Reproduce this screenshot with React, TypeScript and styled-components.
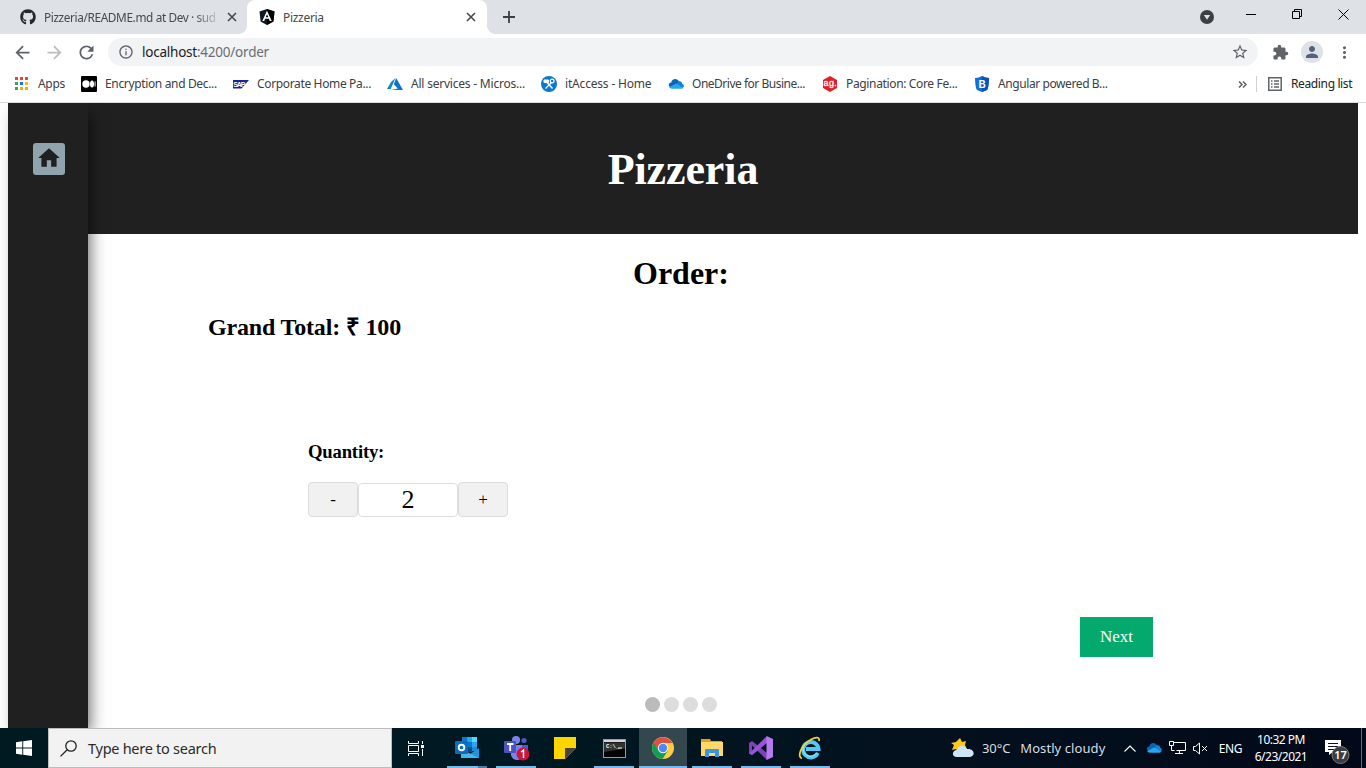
import React from 'react';
import styled, { createGlobalStyle } from 'styled-components';
import {
  MdArrowBack, MdArrowForward, MdRefresh, MdInfoOutline, MdStarBorder,
  MdExtension, MdPerson, MdMoreVert, MdHome,
} from 'react-icons/md';
import { FaGithub } from 'react-icons/fa';

const ui = '"Noto Sans", "Open Sans", sans-serif';
const serif = '"Liberation Serif", "Times New Roman", serif';

const GlobalStyle = createGlobalStyle`
  * { box-sizing: border-box; }
  html, body { margin: 0; padding: 0; overflow: hidden; background: #fff; }
  svg { display: block; flex: none; }
`;

const Screen = styled.div`
  width: 1366px;
  height: 768px;
  display: flex;
  flex-direction: column;
  overflow: hidden;
  font-family: ${ui};
`;

/* Browser tabs */
const TabStrip = styled.div`
  height: 34px;
  flex: none;
  display: flex;
  align-items: center;
  background: #dee1e6;
`;
const Tab = styled.div<{ $active?: boolean }>`
  position: relative;
  width: ${p => (p.$active ? 240 : 247)}px;
  height: 34px;
  display: flex;
  align-items: center;
  gap: 8px;
  padding: 0 9px 0 ${p => (p.$active ? 12 : 20)}px;
  border-radius: 8px 8px 0 0;
  background: ${p => (p.$active ? '#fff' : 'transparent')};
  &::before, &::after {
    content: '';
    display: ${p => (p.$active ? 'block' : 'none')};
    position: absolute;
    bottom: 0;
    width: 8px;
    height: 8px;
  }
  &::before { left: -8px; background: radial-gradient(circle at 0 0, transparent 7.5px, #fff 8px); }
  &::after { right: -8px; background: radial-gradient(circle at 100% 0, transparent 7.5px, #fff 8px); }
`;
const TabTitle = styled.div<{ $fade?: boolean }>`
  flex: 1;
  white-space: nowrap;
  font-size: ${p => (p.$fade ? 11.8 : 12)}px;
  letter-spacing: ${p => (p.$fade ? -0.37 : -0.3)}px;
  color: #45494d;
  ${p => p.$fade && 'mask-image: linear-gradient(90deg, #000 86%, rgba(0, 0, 0, 0.15) 100%);'}
`;
const NewTab = styled.div`
  width: 44px;
  display: flex;
  justify-content: center;
`;
const WindowControls = styled.div`
  margin-left: auto;
  display: flex;
  align-items: center;
  height: 34px;
`;
const ControlCell = styled.div<{ $w: number; $lift?: number }>`
  width: ${p => p.$w}px;
  display: flex;
  justify-content: center;
  padding-bottom: ${p => p.$lift ?? 0}px;
`;

/* Address bar */
const Toolbar = styled.div`
  height: 36px;
  flex: none;
  display: flex;
  align-items: center;
  background: #fff;
  color: #5f6368;
`;
const ToolButton = styled.div<{ $faded?: boolean }>`
  width: 32px;
  display: flex;
  justify-content: center;
  color: ${p => (p.$faded ? '#babcbe' : '#5f6368')};
`;
const NavButtons = styled.div`
  display: flex;
  padding: 0 6px;
`;
const Omnibox = styled.div`
  width: 1150px;
  height: 28px;
  border-radius: 14px;
  background: #f1f3f4;
  display: flex;
  align-items: center;
  padding: 0 9px 0 10px;
  margin-right: 6px;
`;
const Url = styled.div`
  flex: 1;
  padding-left: 8px;
  font-size: 13.5px;
  letter-spacing: -0.23px;
  color: #6a6e73;
  b { font-weight: 400; color: #202124; }
`;
const Avatar = styled.div`
  width: 22px;
  height: 22px;
  border-radius: 50%;
  background: #dee1e6;
  color: #54617a;
  display: flex;
  align-items: center;
  justify-content: center;
`;

/* Bookmarks */
const Bookmarks = styled.div`
  height: 33px;
  flex: none;
  display: flex;
  align-items: center;
  padding: 0 14px 4px;
  border-bottom: 1px solid #d8dadc;
  color: #3c4043;
  font-size: 12px;
`;
const Bookmark = styled.div<{ $w: number; $ls: number }>`
  width: ${p => p.$w}px;
  display: flex;
  gap: 8px;
  align-items: center;
  white-space: nowrap;
  letter-spacing: ${p => p.$ls}px;
  span { margin-top: -1px; }
`;
const BookmarkEnd = styled.div`
  margin-left: auto;
  display: flex;
  align-items: center;
  color: #202124;
  letter-spacing: -0.37px;
`;
const Divider = styled.i`
  width: 1px;
  height: 16px;
  background: #cfd1d3;
  margin: 0 11px 0 9px;
`;
const ReadingLabel = styled.span`
  width: 61px;
  margin: -1px 0 0 9px;
  white-space: nowrap;
`;

/* Pizzeria page */
const Page = styled.div`
  height: 625px;
  flex: none;
  display: flex;
  padding: 0 8px;
  background: #fff;
  font-family: ${serif};
  color: #000;
  overflow: hidden;
`;
const Sidebar = styled.aside`
  position: relative;
  width: 80px;
  flex: none;
  background: #202020;
  box-shadow: 5px 8px 15px -3px rgba(0, 0, 0, 0.6);
  padding: 40px 0 0 25px;
`;
const HomeButton = styled.div`
  width: 32px;
  height: 32px;
  border-radius: 3px;
  background: #90a4ae;
  color: #202020;
  display: flex;
  align-items: center;
  justify-content: center;
  padding: 0 1px 3px 0;
`;
const Main = styled.main`
  width: 1270px;
  display: flex;
  flex-direction: column;
`;
const Header = styled.header`
  height: 131px;
  flex: none;
  padding-right: 80px;
  background: #202020;
  display: flex;
  align-items: center;
  justify-content: center;
`;
const Title = styled.h1`
  margin: 3px 0 0;
  font-size: 44px;
  line-height: 50px;
  letter-spacing: -0.1px;
  color: #fff;
`;
const Heading = styled.h2`
  margin: 21px 84px 0 0;
  text-align: center;
  font-size: 32px;
  line-height: 37px;
`;
const Total = styled.h3`
  margin: 21px 0 0 120px;
  font-size: 24px;
  line-height: 28px;
  letter-spacing: -0.17px;
`;
const Quantity = styled.section`
  margin: 100px 0 0 220px;
`;
const QuantityLabel = styled.h4`
  margin: 0;
  font-size: 18.7px;
  line-height: 21px;
  letter-spacing: -0.2px;
`;
const Stepper = styled.div`
  display: flex;
  align-items: flex-end;
  margin-top: 20px;
`;
const StepButton = styled.button`
  width: 50px;
  height: 35px;
  padding: 0;
  border: 1px solid #ddd;
  border-radius: 4px;
  background: #f1f1f1;
  color: #000;
  font: 17px ${serif};
`;
const Count = styled.div`
  width: 100px;
  height: 34px;
  border: 1px solid #ddd;
  border-radius: 4px;
  text-align: center;
  font-size: 26px;
  line-height: 32px;
`;
const NextButton = styled.button`
  width: 73px;
  height: 40px;
  margin: 100px 205px 0 auto;
  padding: 0;
  border: 0;
  background: #04aa6d;
  color: #fff;
  font: 17px ${serif};
`;
const Steps = styled.div`
  display: flex;
  justify-content: center;
  gap: 4px;
  margin: 40px 84px 0 0;
`;
const Step = styled.i<{ $on?: boolean }>`
  width: 15px;
  height: 15px;
  border-radius: 50%;
  background: ${p => (p.$on ? '#bbb' : '#ddd')};
`;

/* Taskbar */
const Taskbar = styled.div`
  height: 40px;
  flex: none;
  display: flex;
  background: linear-gradient(90deg, #001a22 0%, #001821 40%, #03101d 70%, #020918 100%);
  color: #fff;
  white-space: nowrap;
`;
const TaskCell = styled.div<{ $w?: number; $active?: boolean }>`
  position: relative;
  width: ${p => p.$w ?? 48}px;
  height: 40px;
  flex: none;
  display: flex;
  align-items: center;
  justify-content: center;
  background: ${p => (p.$active ? '#33474f' : 'transparent')};
`;
const Running = styled.i<{ $wide?: boolean; $split?: boolean }>`
  position: absolute;
  bottom: 0;
  left: ${p => (p.$wide ? 0 : 4)}px;
  width: ${p => (p.$wide ? 48 : 40)}px;
  height: 2px;
  background: ${p => (p.$split ? 'linear-gradient(90deg, #76b9ed 31px, #4d7da2 31px)' : '#76b9ed')};
`;
const SearchBox = styled.div`
  width: 344px;
  height: 40px;
  border: 1px solid #bcbcbc;
  background: #f2f2f2;
  color: #2b2b2b;
  display: flex;
  align-items: center;
  gap: 11px;
  padding-left: 11px;
  font-size: 14.5px;
  letter-spacing: -0.27px;
`;
const Apps = styled.div`
  display: flex;
  gap: 1px;
  margin-left: 3px;
`;
const Tray = styled.div`
  margin-left: auto;
  display: flex;
  align-items: center;
`;
const Weather = styled.div`
  display: flex;
  align-items: center;
  width: 167px;
  font-size: 13px;
  color: #d8dde1;
`;
const WeatherText = styled.span<{ $gap: number; $ls: number }>`
  margin-left: ${p => p.$gap}px;
  letter-spacing: ${p => p.$ls}px;
`;
const Language = styled.div`
  width: 36px;
  padding-left: 1px;
  text-align: center;
  font-size: 12px;
  letter-spacing: -0.4px;
`;
const Clock = styled.div`
  width: 66px;
  text-align: center;
  font-size: 12px;
  line-height: 17px;
  letter-spacing: -0.5px;
  padding-bottom: 1px;
`;
const Notifications = styled.div`
  width: 47px;
  height: 40px;
  padding: 10px 0 0 11px;
`;
const DesktopEdge = styled.i`
  width: 5px;
  height: 40px;
  border-left: 1px solid #626975;
`;

const Cross = () => (
  <svg width="10" height="10" viewBox="0 0 10 10" stroke="#45494d" strokeWidth="1.6"><path d="M1 1l8 8M9 1l-8 8" /></svg>
);
const AngularMark = () => (
  <svg width="16" height="16" viewBox="0 0 16 16">
    <path d="M8 0l7.5 2.6-1.1 9.8L8 16l-6.4-3.6L.5 2.6z" fill="#10171f" />
    <path d="M8 0l7.5 2.6-1.1 9.8L8 16z" fill="#000" />
    <path d="M8 1.800L3.300 12h1.900l.9-2.200h3.800l.9 2.200h1.900zM8 5.300l1.300 3H6.700z" fill="#fff" fillRule="evenodd" />
  </svg>
);
const AppsGrid = () => (
  <svg width="16" height="16" viewBox="0 0 16 16">
    {['#ea4335', '#ea4335', '#ea4335', '#34a853', '#1a73e8', '#fbbc04', '#34a853', '#f9ab00', '#f9ab00'].map((c, i) => (
      <rect key={i} x={1 + (i % 3) * 5} y={1 + Math.floor(i / 3) * 5} width="3" height="3" fill={c} />
    ))}
  </svg>
);
const MediumMark = () => (
  <svg width="16" height="16" viewBox="0 0 16 16">
    <rect width="16" height="16" rx="1" fill="#000" />
    <circle cx="5" cy="8" r="3.7" fill="#fff" /><ellipse cx="11" cy="8" rx="2" ry="3.6" fill="#fff" />
    <ellipse cx="14.1" cy="8" rx=".6" ry="3.1" fill="#ddd" />
  </svg>
);
const SapMark = () => (
  <svg width="16" height="16" viewBox="0 0 16 16">
    <path d="M0 4h16l-7.5 8.5H0z" fill="#16258c" />
    <text x="0.2" y="10.8" fontFamily="Liberation Sans, sans-serif" fontSize="7" fontWeight="700" fill="#fff" textLength="12">SAP</text>
  </svg>
);
const AzureMark = () => (
  <svg width="16" height="16" viewBox="0 0 16 16">
    <path d="M8.500 2L4 6 0 13h3.700z" fill="#1584cf" />
    <path d="M9.200 2L6.800 8.300l4 4.200L4.500 14H16z" fill="#0d76c7" />
  </svg>
);
const ItMark = () => (
  <svg width="16" height="16" viewBox="0 0 16 16" fill="none" stroke="#fff">
    <circle cx="8" cy="8" r="8" fill="#0779cf" stroke="none" />
    <path d="M3 4h4.500v2.500H3z" fill="#fff" />
    <path d="M4.500 12.500l6-6M11.500 12.500L6 6.500" strokeWidth="1.400" />
    <circle cx="11.200" cy="5" r="1.900" strokeWidth="1.200" />
  </svg>
);
const Cloud = () => (
  <svg width="16" height="16" viewBox="0 0 17 17">
    <path d="M3.500 7C4 3 9 1.500 11.500 5.500L14 8 5 12C-.5 13 0 7 3.500 7z" fill="#0864b8" />
    <path d="M10.500 6C13 4.800 15 6 15.100 8.300 17.500 8.500 17.400 13 14.500 13L8 10z" fill="#1284d8" />
    <path d="M1.200 12L8.500 8l7.500 4.200Q15.500 13.500 14 13.500H4Q2 13.500 1.200 12z" fill="#28a8ea" />
  </svg>
);
const AgMark = () => (
  <svg width="16" height="16" viewBox="0 0 16 16">
    <path d="M8 0l7 4v8l-7 4-7-4V4z" fill="#e01f26" />
    <text x="1.500" y="10" fontFamily="Liberation Sans, sans-serif" fontSize="9" fill="#fff" stroke="#fff" strokeWidth=".3" textLength="13">ag.</text>
  </svg>
);
const BootstrapShield = () => (
  <svg width="16" height="16" viewBox="0 0 16 16">
    <path d="M8 0Q11 2 15 2q-.3 10-2 12l-5 2-5-2Q1.300 12 1 2 5 2 8 0z" fill="#0d6edc" />
    <path d="M8 0Q11 2 15 2q-.3 10-2 12l-5 2z" fill="#0753ba" />
    <text x="4.500" y="11.500" fontFamily="Liberation Sans, sans-serif" fontSize="10" fontWeight="700" fill="#fff">B</text>
  </svg>
);

const bookmarks = [
  { icon: <AppsGrid />, label: 'Apps', w: 67, ls: -0.3 },
  { icon: <MediumMark />, label: 'Encryption and Dec...', w: 152, ls: -0.35 },
  { icon: <SapMark />, label: 'Corporate Home Pa...', w: 154, ls: -0.35 },
  { icon: <AzureMark />, label: 'All services - Micros...', w: 154, ls: -0.21 },
  { icon: <ItMark />, label: 'itAccess - Home', w: 127, ls: -0.18 },
  { icon: <Cloud />, label: 'OneDrive for Busine...', w: 154, ls: -0.49 },
  { icon: <AgMark />, label: 'Pagination: Core Fe...', w: 152, ls: -0.35 },
  { icon: <BootstrapShield />, label: 'Angular powered B...', w: 140, ls: -0.41 },
];

const Outlook = () => (
  <svg width="24" height="24" viewBox="0 0 24 24">
    <path d="M7 1h15v14H7z" fill="#1490df" /><path d="M7 1h5v5H7z" fill="#0f78c8" /><path d="M12 1h5v5h-5z" fill="#28a8ea" /><path d="M17 1h5v5h-5z" fill="#50d9ff" />
    <path d="M12 6h5v5h-5z" fill="#0078d4" /><path d="M17 6h5v5h-5z" fill="#28a8ea" /><path d="M12 11h5v5h-5z" fill="#064a8c" />
    <path d="M6 22V14l9 4 9-6v10z" fill="#1e94dc" /><path d="M6 13l18 9H6z" fill="#42b8ed" />
    <rect y="5" width="13" height="13" rx="1" fill="#0f6cbd" />
    <circle cx="6.500" cy="11.500" r="2.800" fill="none" stroke="#fff" strokeWidth="1.900" />
  </svg>
);
const Teams = () => (
  <svg width="26" height="26" viewBox="0 0 26 26">
    <circle cx="13" cy="5" r="4" fill="#7b83eb" /><circle cx="21" cy="5.500" r="2.600" fill="#5059c9" />
    <path d="M8 10h12v8a6 6 0 0 1-12 2z" fill="#7b83eb" /><path d="M19 10h6v7q-1 4-5 3z" fill="#5059c9" />
    <rect x="1" y="6" width="12" height="12" rx="1" fill="#4b53bc" />
    <path d="M4 9h6.500M7.200 9v7" stroke="#fff" strokeWidth="1.800" />
    <circle cx="20" cy="19" r="6.500" fill="#cf1237" />
    <path d="M18 17l2.500-2v8" fill="none" stroke="#fff" strokeWidth="1.500" />
  </svg>
);
const Sticky = () => (
  <svg width="22" height="22" viewBox="0 0 22 22"><path d="M0 0h22v11L11 22H0z" fill="#ffd500" /><path d="M11 11h11L11 22z" fill="#48443d" /></svg>
);
const Terminal = () => (
  <svg width="23" height="19" viewBox="0 0 23 19">
    <rect x=".5" y=".5" width="22" height="18" fill="#050505" stroke="#969b9d" /><path d="M1 1h21v2H1z" fill="#d4d6d7" /><path d="M1 3.500h21v6L1 13z" fill="#333" />
    <text x="3" y="9" fontFamily="Liberation Mono, monospace" fontSize="5.500" fontWeight="700" fill="#fff">C:\_</text><path d="M15 9h4" stroke="#fff" />
  </svg>
);
const Chrome = () => (
  <svg width="22" height="22" viewBox="0 0 22 22">
    <circle cx="11" cy="11" r="11" fill="#ffcd42" />
    <path d="M11 11L1.500 5.500a11 11 0 0 0 9 16.500L16 13.500z" fill="#109d58" />
    <path d="M11 11L6 13.500 1.500 5.500A11 11 0 0 1 20.500 6H11z" fill="#dd5144" />
    <circle cx="11" cy="11" r="5.200" fill="#f1f1f1" /><circle cx="11" cy="11" r="4.200" fill="#4b8bf5" />
  </svg>
);
const Explorer = () => (
  <svg width="22" height="18" viewBox="0 0 22 18"><path d="M0 0h9l1 2h11v5H0z" fill="#e4a21a" /><path d="M0 3h22v14H0z" fill="#ffda6a" /><path d="M4 18v-7q0-1 1-1h12q1 0 1 1v7h-4v-4H8v4z" fill="#3a96dd" /></svg>
);
const VisualStudio = () => (
  <svg width="24" height="24" viewBox="0 0 24 24">
    <path d="M0 7l3-2 15 12v7L3 9.500v6L0 18z" fill="#7d42b8" />
    <path d="M0 17.500l3 1.800L18 7V0L3 14.500z" fill="#9655d6" />
    <path d="M17.500 0L24 3v18l-6.500 3z" fill="#b57bee" />
  </svg>
);
const InternetExplorer = () => (
  <svg width="24" height="24" viewBox="0 0 24 24" fill="none">
    <path d="M19.800 17A7.700 7.700 0 1 1 20.500 13H8" stroke="#54c8f3" strokeWidth="4" />
    <path d="M19 16.500A7 7 0 0 1 6 9.500" stroke="#a2e7fb" strokeWidth="1" />
    <path d="M4 22.500C-1.500 21 3 9 13 3.500c5-2.800 9-2.700 8 1.500" stroke="#f7cc2e" strokeWidth="1.800" />
  </svg>
);
const apps = [
  { icon: <Outlook />, run: true, split: true }, { icon: <Teams />, run: true }, { icon: <Sticky />, run: false },
  { icon: <Terminal />, run: true }, { icon: <Chrome />, run: true, active: true }, { icon: <Explorer />, run: true },
  { icon: <VisualStudio />, run: true }, { icon: <InternetExplorer />, run: true },
];

export default function App() {
  return (
    <Screen>
      <GlobalStyle />
      <TabStrip>
        <Tab><FaGithub size={16} color="#24292e" /><TabTitle $fade>Pizzeria/README.md at Dev · sud</TabTitle><ControlCell $w={12}><Cross /></ControlCell></Tab>
        <Tab $active><AngularMark /><TabTitle>Pizzeria</TabTitle><ControlCell $w={14}><Cross /></ControlCell></Tab>
        <NewTab><svg width="12" height="12" viewBox="0 0 12 12" stroke="#3c4043" strokeWidth="1.800"><path d="M6 0v12M0 6h12" /></svg></NewTab>
        <WindowControls>
          <ControlCell $w={40}>
            <svg width="14" height="14" viewBox="0 0 14 14"><circle cx="7" cy="7" r="7" fill="#3c4043" /><path d="M3.800 5h6.400L7 9.800z" fill="#dee1e6" /></svg>
          </ControlCell>
          <ControlCell $w={47} $lift={5}><svg width="10" height="1"><rect width="10" height="1" fill="#000" /></svg></ControlCell>
          <ControlCell $w={46} $lift={6}><svg width="10" height="10" viewBox="0 0 10 10" fill="none" stroke="#000"><path d="M.5 2.500h7v7h-7zM2.500 2.500v-2h7v7h-2" /></svg></ControlCell>
          <ControlCell $w={46} $lift={6}><svg width="11" height="11" viewBox="0 0 11 11" stroke="#000"><path d="M.5.5l10 10M10.500.5l-10 10" /></svg></ControlCell>
        </WindowControls>
      </TabStrip>
      <Toolbar>
        <NavButtons>
          <ToolButton><MdArrowBack size={21} /></ToolButton>
          <ToolButton $faded><MdArrowForward size={21} /></ToolButton>
          <ToolButton><MdRefresh size={21} /></ToolButton>
        </NavButtons>
        <Omnibox><MdInfoOutline size={16} /><Url><b>localhost</b>:4200/order</Url><MdStarBorder size={18} /></Omnibox>
        <ToolButton><MdExtension size={17} /></ToolButton>
        <ToolButton><Avatar><MdPerson size={18} /></Avatar></ToolButton>
        <ToolButton><MdMoreVert size={19} /></ToolButton>
      </Toolbar>
      <Bookmarks>
        {bookmarks.map(b => <Bookmark key={b.label} $w={b.w} $ls={b.ls}>{b.icon}<span>{b.label}</span></Bookmark>)}
        <BookmarkEnd>
          <svg width="9" height="7" viewBox="0 0 9 7" fill="none" stroke="#5f6368" strokeWidth="1.500"><path d="M1 .5l3 3-3 3M5 .5l3 3-3 3" /></svg>
          <Divider />
          <svg width="14" height="14" viewBox="0 0 14 14" fill="none" stroke="#5f6368" strokeWidth="1.500"><path d="M.8.8h12.400v12.400H.8zM3 4h1.500M6 4h5M3 7h1.500M6 7h5M3 10h1.500M6 10h5" /></svg>
          <ReadingLabel>Reading list</ReadingLabel>
        </BookmarkEnd>
      </Bookmarks>
      <Page>
        <Sidebar><HomeButton><MdHome size={26} /></HomeButton></Sidebar>
        <Main>
          <Header><Title>Pizzeria</Title></Header>
          <Heading>Order:</Heading>
          <Total>Grand Total: ₹ 100</Total>
          <Quantity>
            <QuantityLabel>Quantity:</QuantityLabel>
            <Stepper><StepButton>-</StepButton><Count>2</Count><StepButton>+</StepButton></Stepper>
          </Quantity>
          <NextButton>Next</NextButton>
          <Steps><Step $on /><Step /><Step /><Step /></Steps>
        </Main>
      </Page>
      <Taskbar>
        <TaskCell><svg width="16" height="16" viewBox="0 0 16 16" fill="#fff"><path d="M0 2.200L6.300 1.300v6.200H0zM7.200 1.200L16 0v7.500H7.200zM0 8.400h6.300v6.300L0 13.800zM7.200 8.400H16V16l-8.800-1.200z" /></svg></TaskCell>
        <SearchBox>
          <svg width="17" height="17" viewBox="0 0 17 17" fill="none" stroke="#222" strokeWidth="1.300"><circle cx="11" cy="6" r="5.200" /><path d="M7.200 9.700L.5 16.400" /></svg>
          <span>Type here to search</span>
        </SearchBox>
        <TaskCell>
          <svg width="16" height="15" viewBox="0 0 16 15" fill="none" stroke="#fff"><path d="M.5 0v2.500h10V0M.5 15v-2.500h10V15M.5 4.500h10v6H.5zM14.500 0v3M14.500 8v7" /><path d="M13 4h3v3h-3z" fill="#fff" stroke="none" /></svg>
        </TaskCell>
        <Apps>
          {apps.map((a, i) => <TaskCell key={i} $active={a.active}>{a.icon}{a.run && <Running $wide={a.active} $split={a.split} />}</TaskCell>)}
        </Apps>
        <Tray>
          <Weather>
            <svg width="24" height="20" viewBox="0 0 24 20">
              <path d="M9 0l2 4 4-1-1 4 2 5-9 2-2-3-4 1 2-5-3-2 5-1z" fill="#ffc917" />
              <path d="M6 19C0 19 1 12 6 12c1-5 8-6 10-1 8-1 9 8 2 8z" fill="#cce5f8" />
            </svg>
            <WeatherText $gap={7} $ls={-0.1}>30°C</WeatherText>
            <WeatherText $gap={10} $ls={0.08}>Mostly cloudy</WeatherText>
          </Weather>
          <TaskCell $w={24}><svg width="12" height="7" viewBox="0 0 12 7" fill="none" stroke="#fff" strokeWidth="1.200"><path d="M.5 6.500L6 1l5.500 5.500" /></svg></TaskCell>
          <TaskCell $w={24}><Cloud /></TaskCell>
          <TaskCell $w={23}><svg width="17" height="14" viewBox="0 0 17 14" fill="none" stroke="#fff"><path d="M4.500 1.500h12v8h-9M10.500 9.500v3M6 12.500h8M.5.5h4v4h-4zM2.500 4.500v5h3" /></svg></TaskCell>
          <TaskCell $w={23}><svg width="15" height="13" viewBox="0 0 15 13" fill="none" stroke="#fff"><path d="M.5 4.500h2L6.500 1v11L2.500 8.500h-2zM9 4l5 5M14 4L9 9" /></svg></TaskCell>
          <Language>ENG</Language>
          <Clock>10:32 PM<br />6/23/2021</Clock>
          <Notifications>
            <svg width="28" height="26" viewBox="0 0 28 26">
              <path d="M0 2h16v12h-8l-4 3v-3H0z" fill="#fff" /><path d="M3 5.500h10M3 8.500h10M3 11.500h6" stroke="#07111f" />
              <circle cx="15.500" cy="17" r="8.500" fill="#3b3d43" stroke="#777" />
              <text x="15.500" y="21" textAnchor="middle" fontFamily={ui} fontSize="11" fontWeight="600" fill="#fff">17</text>
            </svg>
          </Notifications>
          <DesktopEdge />
        </Tray>
      </Taskbar>
    </Screen>
  );
}
